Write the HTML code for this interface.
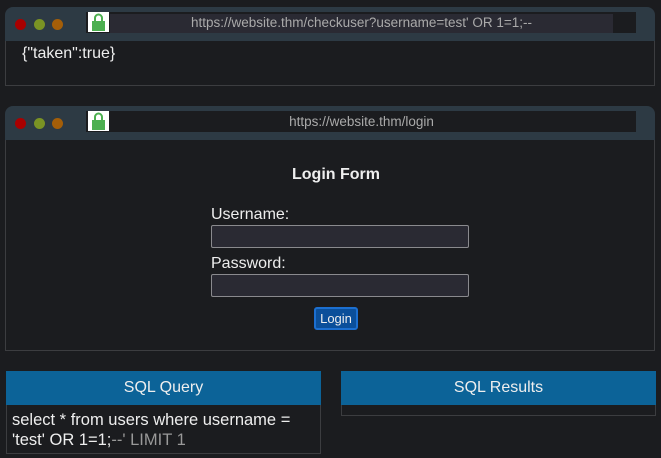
<!DOCTYPE html><html><head><style>
body{margin:0;width:661px;height:458px;background:#1b1c1f;font-family:"Liberation Sans",sans-serif;position:relative;overflow:hidden;color:#eee}
.a{position:absolute;box-sizing:border-box}
.hd{background:#2d3a44;border-radius:8px 8px 0 0}
.dot{position:absolute;width:11px;height:11px;border-radius:50%;top:12px}
.bar{background:#1b1c1f}
.lock{background:#fff}
</style></head><body>
<div class="a hd" style="left:5px;top:7px;width:650px;height:34px"></div>
<div class="a" style="left:5px;top:41px;width:650px;height:45px;border:1px solid #3c3d40;border-top:none"></div>
<div class="a" style="left:0;top:7px"><div class="dot" style="left:15px;background:#a90000"></div><div class="dot" style="left:34px;background:#7a9324"></div><div class="dot" style="left:52px;background:#a45e08"></div></div>
<div class="a bar" style="left:86px;top:12px;width:550px;height:21px"></div>
<div class="a" style="left:110px;top:14px;width:503px;height:19px;background:#2a2a33"></div>
<div class="a lock" style="left:88px;top:12px;width:21px;height:20px"><svg width="21" height="20"><path d="M7 10V6a3.5 3.5 0 0 1 7 0v4" fill="none" stroke="#4caf50" stroke-width="2"/><rect x="4" y="9" width="13" height="10" fill="#4caf50"/></svg></div>
<div class="a" style="left:110px;top:15px;width:503px;text-align:center;font-size:13.5px;color:#aaa">https://website.thm/checkuser?username=test' OR 1=1;--</div>
<div class="a" style="left:22px;top:45px;font-size:16px;color:#eee">{"taken":true}</div>

<div class="a hd" style="left:5px;top:106px;width:650px;height:34px"></div>
<div class="a" style="left:5px;top:140px;width:650px;height:211px;border:1px solid #3c3d40;border-top:none"></div>
<div class="a" style="left:0;top:106px"><div class="dot" style="left:15px;background:#a90000"></div><div class="dot" style="left:34px;background:#7a9324"></div><div class="dot" style="left:52px;background:#a45e08"></div></div>
<div class="a bar" style="left:86px;top:111px;width:550px;height:21px"></div>
<div class="a lock" style="left:88px;top:111px;width:21px;height:20px"><svg width="21" height="20"><path d="M7 10V6a3.5 3.5 0 0 1 7 0v4" fill="none" stroke="#4caf50" stroke-width="2"/><rect x="4" y="9" width="13" height="10" fill="#4caf50"/></svg></div>
<div class="a" style="left:110px;top:114px;width:503px;text-align:center;font-size:13.5px;color:#aaa">https://website.thm/login</div>
<div class="a" style="left:200px;top:166px;width:272px;text-align:center;font-size:16px;font-weight:bold">Login Form</div>
<div class="a" style="left:211px;top:206px;font-size:16px">Username:</div>
<div class="a" style="left:211px;top:225px;width:258px;height:23px;background:#2a2a33;border:1px solid #8a8a8e;border-radius:2px"></div>
<div class="a" style="left:211px;top:255px;font-size:16px">Password:</div>
<div class="a" style="left:211px;top:274px;width:258px;height:23px;background:#2a2a33;border:1px solid #8a8a8e;border-radius:2px"></div>
<div class="a" style="left:314px;top:307px;width:44px;height:23px;background:#0b4f9a;border:2px solid #1c6fd0;border-radius:3px;font-size:13px;text-align:center;line-height:19px">Login</div>

<div class="a" style="left:6px;top:371px;width:315px;height:83px;border:1px solid #3c3d40"></div>
<div class="a" style="left:6px;top:371px;width:315px;height:34px;background:#0c6398;text-align:center;font-size:16px;line-height:34px">SQL Query</div>
<div class="a" style="left:12px;top:410px;font-size:16.5px;line-height:20px">select * from users where username =<br>'test' OR 1=1;<span style="color:#999">--' LIMIT 1</span></div>
<div class="a" style="left:341px;top:371px;width:315px;height:45px;border:1px solid #3c3d40"></div>
<div class="a" style="left:341px;top:371px;width:315px;height:34px;background:#0c6398;text-align:center;font-size:16px;line-height:34px">SQL Results</div>
</body></html>
